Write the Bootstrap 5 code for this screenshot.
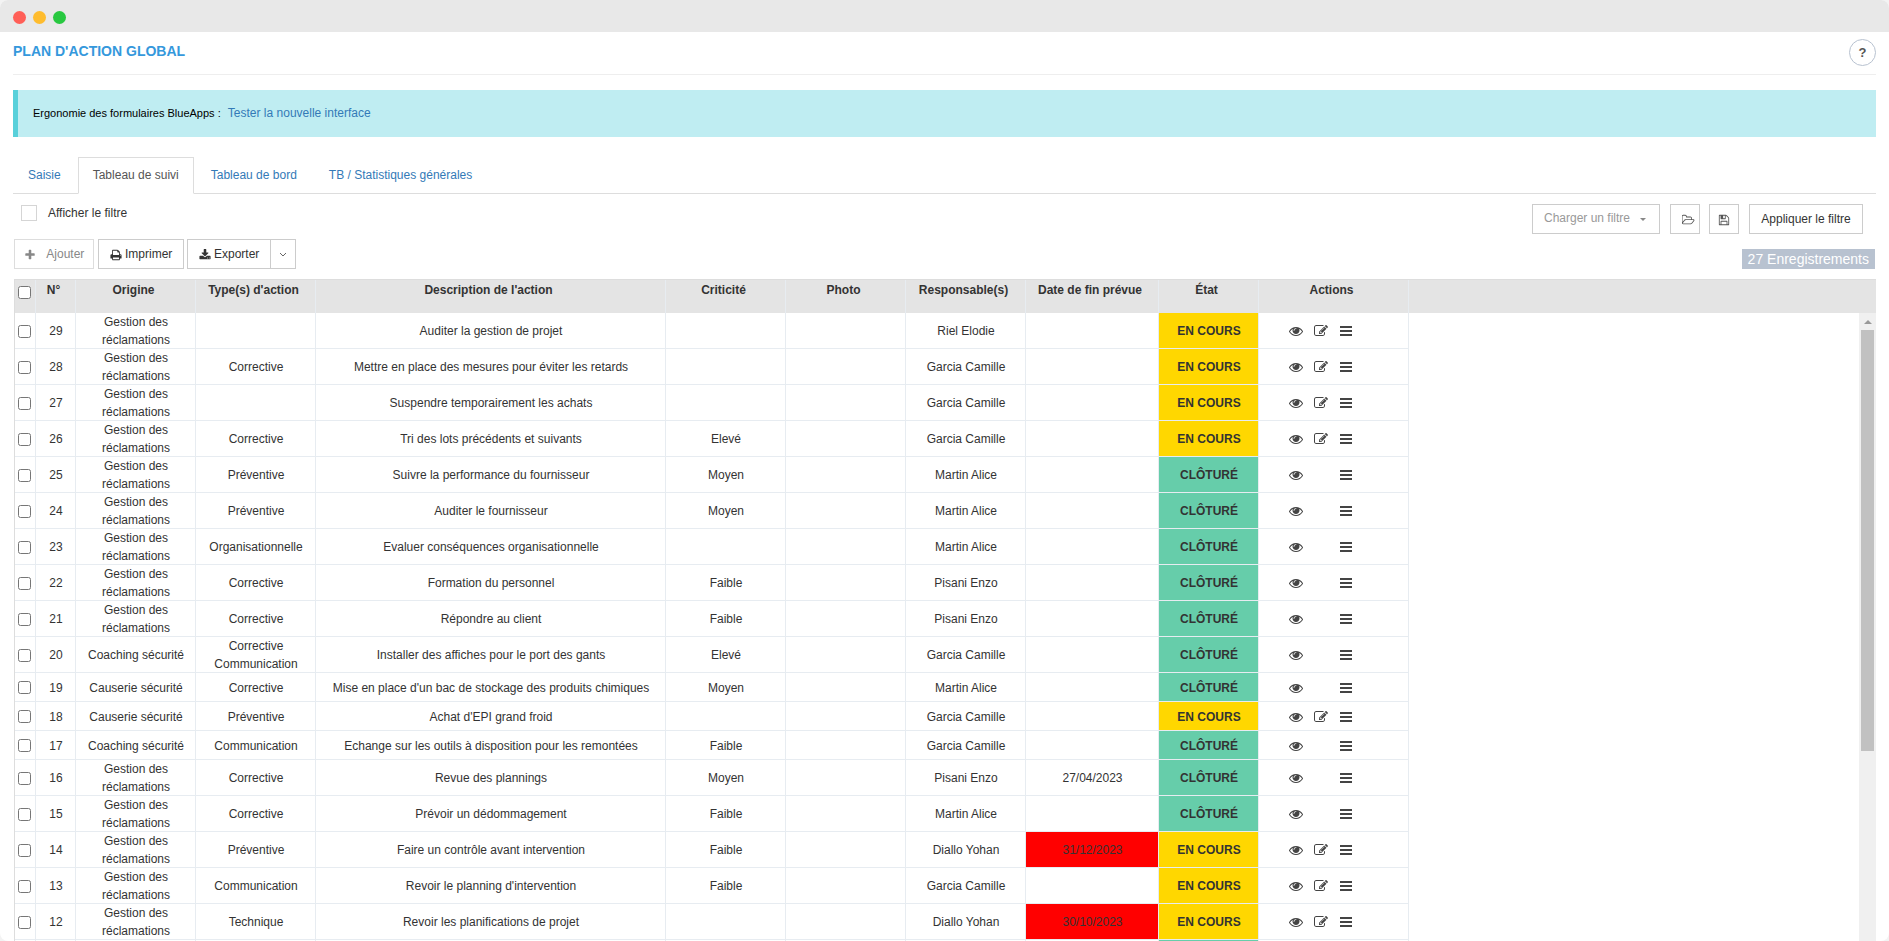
<!DOCTYPE html>
<html lang="fr">
<head>
<meta charset="utf-8">
<meta name="viewport" content="width=device-width, initial-scale=1">
<title>Plan d'action global</title>
<link href="https://cdn.jsdelivr.net/npm/bootstrap@5.3.0/dist/css/bootstrap.min.css" rel="stylesheet">
<style>
  body { background: #f3f3f3; color: #333; font: 12px/18px "Liberation Sans", Arial, sans-serif; }
  a { color: #337ab7; text-decoration: none; }
  .app-window { height: 100vh; border-radius: 8px; background: #fff; }
  .title-bar { height: 32px; padding: 2px 13px 0; gap: 7px; background: #e8e8e8; }
  .dot { width: 13px; height: 13px; border-radius: 50%; }
  .dot-close { background: #ff5f57; }
  .dot-min { background: #febc2e; }
  .dot-max { background: #28c840; }
  .app-body { padding: 0 13px; min-height: 0; }
  .app-body > * { flex-shrink: 0; }
  .page-head { height: 43px; border-bottom: 1px solid #eee; margin-bottom: 15px; }
  .page-head h1 { font-size: 14px; line-height: 20px; font-weight: 700; color: #3598dc; padding-top: 9px; margin: 0; }
  .help-btn { width: 27px; height: 27px; margin-top: 7px; padding: 0; border: 1px solid #b8c2d0; border-radius: 50%; background: #fff; color: #555; font-size: 13px; font-weight: 700; }
  .note { height: 47px; padding: 14px 15px; margin-bottom: 20px; border-left: 5px solid #58d0da; background: #bfedf2; color: #000; }
  .note span { font-size: 11px; }
  .nav-tabs { --bs-nav-tabs-border-color: #ddd; gap: 2px; }
  .nav-tabs .nav-link { padding: 8px 14px 9px; border-radius: 0; color: #337ab7; }
  .nav-tabs .nav-link.active { color: #555; border-color: #ddd #ddd #fff; }
  .filter-row { padding: 10px 13px 5px 8px; }
  .filter-row .form-check-input { width: 16px; height: 16px; margin: 1px 11px 0 0; border: 1px solid #d5d5d5; border-radius: 0; }
  .filter-tools { gap: 10px; }
  .icon-pair { gap: 9px; }
  .tool-btn { height: 30px; padding: 0 11px; border: 1px solid #ccc; border-radius: 0; background: #fff; color: #333; font-size: 12px; line-height: 26px; }
  .tool-btn:disabled { color: #888; border-color: #ddd; opacity: 1; }
  .tool-btn svg { width: 12px; height: 12px; }
  .w-add { min-width: 80px; }
  .w-print { min-width: 86px; margin-right: 3px; }
  .w-export { min-width: 84px; }
  .w-apply { min-width: 114px; }
  .icon-btn { width: 30px; padding: 0; color: #555; }
  .icon-btn.folder { padding-left: 6px; }
  .icon-btn.folder svg { width: 13px; }
  .filter-select { width: 128px; height: 30px; padding: 0 11px 2px; border: 1px solid #ccc; border-radius: 0; color: #999; font-size: 12px;
    background: #fff url("data:image/svg+xml,%3Csvg xmlns='http://www.w3.org/2000/svg' viewBox='0 0 6 3'%3E%3Cpath d='M0 0h6l-3 3z' fill='%23888'/%3E%3C/svg%3E") no-repeat right 13px center / 6px 3px; }
  .count { padding: 0 6px; line-height: 20px; font-size: 14px; background: #b8c2d0; color: #fff; }
  .grid-box { flex: 1 1 0; min-height: 0; margin: 10px 0 0 1px; border: solid #ddd; border-width: 1px 0 0 1px; }
  .grid-table { table-layout: fixed; margin: 0; color: #333; text-align: center; }
  .grid-table thead th { height: 33px; padding: 1px 5px 0 0; border: 0; vertical-align: top; background: #e4e4e4; box-shadow: inset -1px 0 #e7ecf1; }
  .grid-table tbody td { height: 29px; padding: 0 4px; border: 0; vertical-align: middle; color: #333; background: #fff; box-shadow: inset -1px -1px #e7ecf1; }
  .grid-table thead th:last-child, .grid-table tbody td:last-child { box-shadow: none; }
  .grid-table tbody .st-open { background: #ffd700; font-weight: 700; }
  .grid-table tbody .st-done { background: #66cdaa; font-weight: 700; }
  .grid-table tbody .late { background: #f00; }
  .grid-table input { display: block; width: 13px; height: 13px; margin: 0 auto; }
  .grid-table thead input { margin-top: 6px; }
  .grid-table thead .pick, .grid-table tbody .pick { padding: 0 2px 0 0; }
  .c-pick { width: 21px; } .c-num { width: 40px; } .c-std { width: 120px; } .c-desc { width: 350px; }
  .c-date { width: 133px; } .c-state { width: 100px; } .c-act { width: 150px; }
  .acts { padding-left: 20px; }
  .acts > * { width: 25px; height: 14px; display: flex; justify-content: center; color: #444; }
  .acts svg { width: 14px; height: 14px; }
  .scroll-track { top: 33px; right: 0; bottom: 0; width: 17px; background: #f0f0f0; }
  .scroll-up { height: 17px; padding-top: 7px; }
  .scroll-up::before { content: ""; display: block; width: 0; margin: 0 auto; border: solid transparent; border-width: 0 4px 4px; border-bottom-color: #999; }
  .scroll-thumb { width: 13px; height: 67%; margin: 0 auto; background: #c1c1c1; }
</style>
</head>
<body>
<svg class="d-none" xmlns="http://www.w3.org/2000/svg">
  <symbol id="i-eye" viewBox="0 0 1792 1792"><path d="M1664 960q-152-236-381-353 61 104 61 225 0 185-131.5 316.5t-316.5 131.5-316.5-131.5-131.5-316.5q0-121 61-225-229 117-381 353 133 205 333.5 326.5t434.5 121.5 434.5-121.5 333.5-326.5zm-720-384q0-20-14-34t-34-14q-125 0-214.5 89.5t-89.500 214.500q0 20 14 34t34 14 34-14 14-34q0-86 61-147t147-61q20 0 34-14t14-34zm848 384q0 34-20 69-140 230-376.500 368.500t-499.500 138.500-499.500-139-376.500-368q-20-35-20-69t20-69q140-229 376.500-368t499.500-139 499.500 139 376.500 368q20 35 20 69z"/></symbol>
  <symbol id="i-edit" viewBox="0 0 1792 1792"><path d="M888 1184l116-116-152-152-116 116v56h96v96h56zm440-720q-16-16-33 1l-350 350q-17 17-1 33t33-1l350-350q17-17 1-33zm80 594v190q0 119-84.500 203.500t-203.500 84.500h-832q-119 0-203.500-84.500t-84.500-203.500v-832q0-119 84.500-203.500t203.500-84.500h832q63 0 117 25 15 7 18 23 3 17-9 29l-49 49q-14 14-32 8-23-6-45-6h-832q-66 0-113 47t-47 113v832q0 66 47 113t113 47h832q66 0 113-47t47-113v-126q0-13 9-22l64-64q15-15 35-7t20 29zm-96-738l288 288-672 672h-288v-288zm444 132l-92 92-288-288 92-92q28-28 68-28t68 28l152 152q28 28 28 68t-28 68z"/></symbol>
  <symbol id="i-bars" viewBox="0 0 14 14"><path d="M1 2h12v2H1zM1 6h12v2H1zM1 10h12v2H1z"/></symbol>
  <symbol id="i-plus" viewBox="0 0 1792 1792"><path d="M1600 736v192q0 40-28 68t-68 28h-416v416q0 40-28 68t-68 28h-192q-40 0-68-28t-28-68v-416h-416q-40 0-68-28t-28-68v-192q0-40 28-68t68-28h416v-416q0-40 28-68t68-28h192q40 0 68 28t28 68v416h416q40 0 68 28t28 68z"/></symbol>
  <symbol id="i-print" viewBox="0 0 1792 1792"><path d="M448 1536h896v-256h-896v256zm0-640h896v-384h-160q-40 0-68-28t-28-68v-160h-640v640zm1152 64q0-26-19-45t-45-19-45 19-19 45 19 45 45 19 45-19 19-45zm128 0v416q0 13-9.500 22.500t-22.500 9.500h-224v160q0 40-28 68t-68 28h-960q-40 0-68-28t-28-68v-160h-224q-13 0-22.500-9.500t-9.500-22.500v-416q0-79 56.500-135.500t135.500-56.500h64v-544q0-40 28-68t68-28h672q40 0 88 20t76 48l152 152q28 28 48 76t20 88v256h64q79 0 135.500 56.500t56.500 135.500z"/></symbol>
  <symbol id="i-download" viewBox="0 0 1792 1792"><path d="M1344 1344q0-26-19-45t-45-19-45 19-19 45 19 45 45 19 45-19 19-45zm256 0q0-26-19-45t-45-19-45 19-19 45 19 45 45 19 45-19 19-45zm128-224v320q0 40-28 68t-68 28h-1472q-40 0-68-28t-28-68v-320q0-40 28-68t68-28h465l135 136q58 56 136 56t136-56l136-136h464q40 0 68 28t28 68zm-325-569q17 41-14 70l-448 448q-18 19-45 19t-45-19l-448-448q-31-29-14-70 17-39 59-39h256v-448q0-26 19-45t45-19h256q26 0 45 19t19 45v448h256q42 0 59 39z"/></symbol>
  <symbol id="i-save" viewBox="0 0 1792 1792"><path d="M512 1536h768v-384h-768v384zm896 0h128v-896q0-14-10-38.500t-20-34.500l-281-281q-10-10-34-20t-39-10v416q0 40-28 68t-68 28h-576q-40 0-68-28t-28-68v-416h-128v1280h128v-416q0-40 28-68t68-28h832q40 0 68 28t28 68v416zm-384-928v-320q0-13-9.500-22.500t-22.500-9.500h-192q-13 0-22.500 9.500t-9.500 22.500v320q0 13 9.500 22.500t22.500 9.500h192q13 0 22.500-9.500t9.500-22.500zm640 32v928q0 40-28 68t-68 28h-1344q-40 0-68-28t-28-68v-1344q0-40 28-68t68-28h928q40 0 88 20t76 48l280 280q28 28 48 76t20 88z"/></symbol>
  <symbol id="i-folder" viewBox="0 0 1920 1792"><path d="M1717 931q0-35-53-35h-1088q-40 0-85.500 21.500t-71.500 52.500l-294 363q-18 24-18 40 0 35 53 35h1088q40 0 86-22t71-53l294-363q18-22 18-39zm-1141-163h768v-160q0-40-28-68t-68-28h-576q-40 0-68-28t-28-68v-64q0-40-28-68t-68-28h-320q-40 0-68 28t-28 68v853l256-315q44-53 116-87.500t140-34.500zm1269 163q0 62-46 120l-295 363q-43 53-116 87.500t-140 34.500h-1088q-92 0-158-66t-66-158v-960q0-92 66-158t158-66h320q92 0 158 66t66 158v32h544q92 0 158 66t66 158v160h192q54 0 99 24.500t67 70.500q15 32 15 68z"/></symbol>
</svg>

<div class="app-window d-flex flex-column overflow-hidden">
  <div class="title-bar d-flex align-items-center flex-shrink-0">
    <span class="dot dot-close"></span><span class="dot dot-min"></span><span class="dot dot-max"></span>
  </div>

  <main class="app-body d-flex flex-column flex-grow-1">
    <header class="page-head d-flex justify-content-between align-items-start">
      <h1>PLAN D'ACTION GLOBAL</h1>
      <button type="button" class="help-btn">?</button>
    </header>

    <div class="note"><span class="me-1">Ergonomie des formulaires BlueApps :</span> <a href="#">Tester la nouvelle interface</a></div>

    <ul class="nav nav-tabs">
      <li class="nav-item"><a class="nav-link" href="#">Saisie</a></li>
      <li class="nav-item"><a class="nav-link active" aria-current="page" href="#">Tableau de suivi</a></li>
      <li class="nav-item"><a class="nav-link" href="#">Tableau de bord</a></li>
      <li class="nav-item"><a class="nav-link" href="#">TB / Statistiques générales</a></li>
    </ul>

    <div class="filter-row d-flex justify-content-between align-items-start">
      <div class="d-flex">
        <input class="form-check-input" type="checkbox" id="show-filter">
        <label for="show-filter">Afficher le filtre</label>
      </div>
      <div class="filter-tools d-flex">
        <select class="form-select filter-select" aria-label="Charger un filtre"><option>Charger un filtre</option></select>
        <div class="icon-pair d-flex">
          <button type="button" class="btn tool-btn icon-btn folder" aria-label="Ouvrir"><svg fill="currentColor"><use href="#i-folder"/></svg></button>
          <button type="button" class="btn tool-btn icon-btn" aria-label="Enregistrer"><svg fill="currentColor"><use href="#i-save"/></svg></button>
        </div>
        <button type="button" class="btn tool-btn w-apply px-0">Appliquer le filtre</button>
      </div>
    </div>

    <div class="d-flex justify-content-between align-items-end" style="padding: 0 1px">
      <div class="d-flex">
        <button type="button" class="btn tool-btn w-add me-1 px-2" disabled><svg class="me-2" fill="currentColor"><use href="#i-plus"/></svg> Ajouter</button>
        <button type="button" class="btn tool-btn w-print px-0"><svg fill="currentColor"><use href="#i-print"/></svg> Imprimer</button>
        <div class="btn-group">
          <button type="button" class="btn tool-btn w-export px-0"><svg fill="currentColor"><use href="#i-download"/></svg> Exporter</button>
          <button type="button" class="btn tool-btn px-2" aria-label="Formats"><svg style="width: 8px; height: 8px" viewBox="0 0 8 8" fill="none" stroke="#666"><path d="M1 2l3 3 3-3"/></svg></button>
        </div>
      </div>
      <div class="count">27 Enregistrements</div>
    </div>

    <div class="grid-box position-relative overflow-hidden">
      <table class="table grid-table">
        <colgroup>
          <col class="c-pick"><col class="c-num"><col class="c-std"><col class="c-std"><col class="c-desc"><col class="c-std"><col class="c-std"><col class="c-std"><col class="c-date"><col class="c-state"><col class="c-act"><col>
        </colgroup>
        <thead>
          <tr>
            <th class="pick"><input type="checkbox" aria-label="Tout sélectionner"></th>
            <th>N°</th><th>Origine</th><th>Type(s) d'action</th><th>Description de l'action</th><th>Criticité</th><th>Photo</th><th>Responsable(s)</th><th>Date de fin prévue</th><th>État</th><th>Actions</th><th></th>
          </tr>
        </thead>
        <tbody id="rows"></tbody>
      </table>
      <div class="scroll-track position-absolute">
        <div class="scroll-up"></div>
        <div class="scroll-thumb"></div>
      </div>
    </div>
  </main>
</div>

<script src="https://cdn.jsdelivr.net/npm/bootstrap@5.3.0/dist/js/bootstrap.bundle.min.js"></script>
<script>
  const R = 'Gestion des réclamations';
  // number, origin, type, description, severity, owner, due date, open?, late?
  const actions = [
    [29, R, '', 'Auditer la gestion de projet', '', 'Riel Elodie', '', 1],
    [28, R, 'Corrective', 'Mettre en place des mesures pour éviter les retards', '', 'Garcia Camille', '', 1],
    [27, R, '', 'Suspendre temporairement les achats', '', 'Garcia Camille', '', 1],
    [26, R, 'Corrective', 'Tri des lots précédents et suivants', 'Elevé', 'Garcia Camille', '', 1],
    [25, R, 'Préventive', 'Suivre la performance du fournisseur', 'Moyen', 'Martin Alice', '', 0],
    [24, R, 'Préventive', 'Auditer le fournisseur', 'Moyen', 'Martin Alice', '', 0],
    [23, R, 'Organisationnelle', 'Evaluer conséquences organisationnelle', '', 'Martin Alice', '', 0],
    [22, R, 'Corrective', 'Formation du personnel', 'Faible', 'Pisani Enzo', '', 0],
    [21, R, 'Corrective', 'Répondre au client', 'Faible', 'Pisani Enzo', '', 0],
    [20, 'Coaching sécurité', 'Corrective Communication', 'Installer des affiches pour le port des gants', 'Elevé', 'Garcia Camille', '', 0],
    [19, 'Causerie sécurité', 'Corrective', "Mise en place d'un bac de stockage des produits chimiques", 'Moyen', 'Martin Alice', '', 0],
    [18, 'Causerie sécurité', 'Préventive', "Achat d'EPI grand froid", '', 'Garcia Camille', '', 1],
    [17, 'Coaching sécurité', 'Communication', 'Echange sur les outils à disposition pour les remontées', 'Faible', 'Garcia Camille', '', 0],
    [16, R, 'Corrective', 'Revue des plannings', 'Moyen', 'Pisani Enzo', '27/04/2023', 0],
    [15, R, 'Corrective', 'Prévoir un dédommagement', 'Faible', 'Martin Alice', '', 0],
    [14, R, 'Préventive', 'Faire un contrôle avant intervention', 'Faible', 'Diallo Yohan', '31/12/2023', 1, 1],
    [13, R, 'Communication', "Revoir le planning d'intervention", 'Faible', 'Garcia Camille', '', 1],
    [12, R, 'Technique', 'Revoir les planifications de projet', '', 'Diallo Yohan', '30/10/2023', 1, 1]
  ];
  const icon = (name, label) =>
    `<a href="#" aria-label="${label}"><svg fill="currentColor"><use href="#i-${name}"/></svg></a>`;
  document.getElementById('rows').innerHTML = actions.map(
    ([num, origin, type, text, level, owner, due, open, late]) => `
    <tr>
      <td class="pick"><input type="checkbox" aria-label="Sélectionner ${num}"></td>
      <td>${num}</td><td>${origin}</td><td>${type}</td><td>${text}</td><td>${level}</td><td></td><td>${owner}</td>
      <td class="${late ? 'late' : ''}">${due}</td>
      <td class="${open ? 'st-open' : 'st-done'}">${open ? 'EN COURS' : 'CLÔTURÉ'}</td>
      <td><div class="acts d-flex">${icon('eye', 'Voir')}${open ? icon('edit', 'Modifier') : '<span></span>'}${icon('bars', 'Menu')}</div></td>
      <td></td>
    </tr>`).join('') +
    '<tr>' + '<td></td>'.repeat(9) + '<td class="st-done"></td>' + '<td></td>'.repeat(2) + '</tr>';
</script>
</body>
</html>
